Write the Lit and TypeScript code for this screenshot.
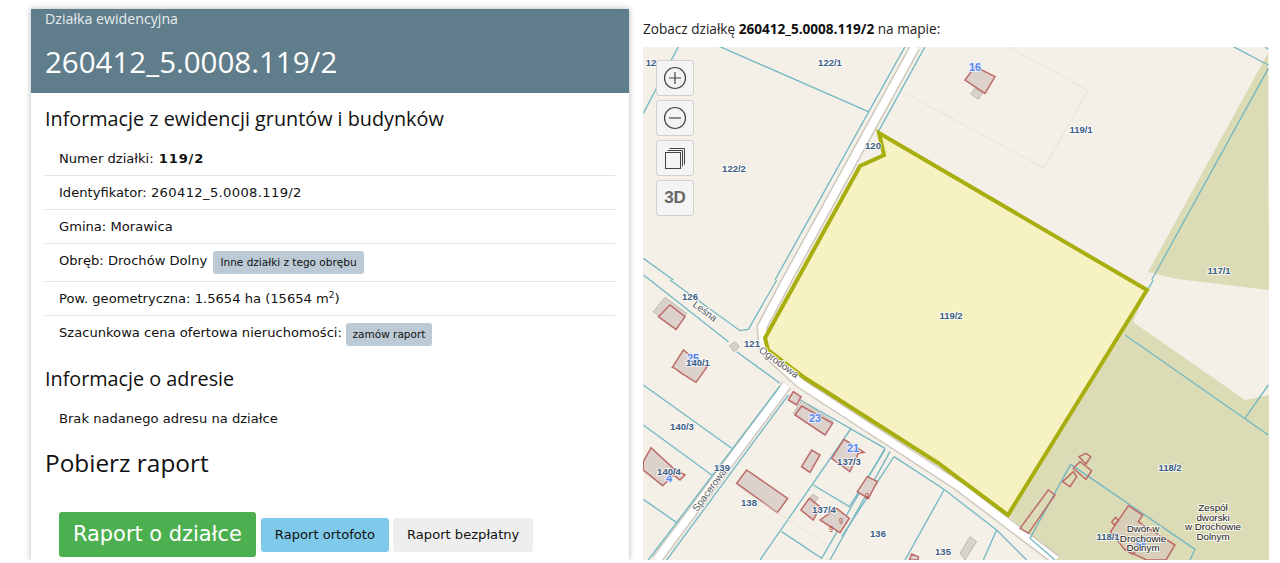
import { LitElement, html, css, svg } from "lit";
import { customElement } from "lit/decorators.js";

const Z3 = "translate(640 0) scale(.33333)";
const Z4 = "translate(960 0) scale(.33333)";
const Z5 = "translate(640 280) scale(.33333)";
const Z6 = "translate(960 280) scale(.33333)";

const blue5 = [
  "90,0 300,152 325,148 410,0", "30,0 265,185", "290,215 420,310", "10,315 275,505", "10,435 215,585",
  "10,658 110,728", "420,318 25,840", "445,345 80,840", "632,447 360,840", "455,345 735,505",
  "735,505 545,835 425,755", "520,615 628,680 735,510", "750,515 570,840", "762,530 915,630 960,665",
  "912,630 795,840", "762,530 605,770",
];
const blue6 = [
  "495,165 925,465", "855,415 925,315", "210,775 332,553 705,808 690,840", "0,665 110,750 200,840",
  "110,750 70,840", "210,775 285,840", "580,0 565,25",
];
const blue3 = ["115,140 10,340", "240,140 685,335", "10,775 100,840", "10,825 30,840", "795,140 405,840", "855,140 715,395"];
const blue4 = ["820,140 925,195", "925,205 575,840", "915,142 925,147"];

const bld5 = [
  "55,110 90,75 135,110 108,148", "97,262 130,210 200,262 168,307 125,280 105,265", "445,360 460,335 483,350 470,375",
  "465,405 485,378 578,430 555,465", "485,560 515,510 540,525 510,577", "575,535 612,478 672,517 655,520 630,575",
  "652,635 682,590 712,605 685,655", "290,610 320,570 443,655 412,698",
  "10,545 33,503 100,565 135,585 120,600 100,585 68,617 10,570", "483,690 508,655 540,680 520,720",
  "540,720 590,685 628,715 600,758", "808,840 815,822 835,830 835,840",
];
const labels: [string, number, number][] = [
  ["122/1", 830, 66], ["122/2", 734, 172], ["119/1", 1081, 133], ["117/1", 1219, 274], ["119/2", 951, 319],
  ["126", 690, 300], ["121", 752, 347], ["140/1", 698, 366], ["140/3", 682, 430], ["140/4", 669, 475], ["139", 722, 471],
  ["138", 749, 506], ["137/3", 849, 465], ["137/4", 824, 513], ["136", 878, 537], ["135", 943, 555], ["118/2", 1170, 471], ["118/1", 1108, 540],
  ["12", 651, 66], ["120", 873, 149],
];
const nums: [string, number, number][] = [["16", 975, 71], ["25", 693, 362], ["23", 815, 422], ["21", 853, 452], ["4", 669, 482]];

@customElement("app-root")
export class AppRoot extends LitElement {
  static styles = css`
    :host { display: block; width: 1280px; height: 563px; overflow: hidden; background: #fff; }
    .page { display: flex; height: 560px; padding-left: 31px; gap: 14px; box-sizing: border-box; padding-top: 9px; }
    .card { width: 598px; flex: none; background: #fff; box-shadow: 0 0 6px rgba(0,0,0,.3); overflow: hidden;
      font: 13.1px/19px "DejaVu Sans", sans-serif; color: #111; clip-path: inset(-8px -8px 0 -8px); }
    .head { background: #607d8b; color: #fff; height: 84px; padding: 0 14px; box-sizing: border-box; }
    .kicker { font: 14.2px/19px "Open Sans", sans-serif; color: #e6ecef; }
    .title { font: 29.5px/40px "Open Sans", sans-serif; margin-top: 14px; }
    .body { padding: 0 14px; }
    h3 { font: 400 19.8px/26px "Open Sans", sans-serif; margin: 13px 0 10px; color: #111; }
    .row { padding: 7px 14px; border-bottom: 1px solid #e3e3e3; }
    .row.last { border-bottom: none; }
    .wide { letter-spacing: .35px; }
    b { font-weight: 700; letter-spacing: .8px; margin-left: 1px; }
    sup { font-size: 9px; line-height: 0; vertical-align: 5px; }
    .lab { display: inline-block; background: #bccad5; border-radius: 3px; font-size: 10.5px; line-height: 23px;
      padding: 0 7px; color: #111; margin-left: 2px; vertical-align: top; }
    .lab.tight { margin-left: 0; padding: 0 6.5px; }
    h2 { font: 400 24.4px/34px "Open Sans", sans-serif; margin: 11px 0 32px; color: #111; }
    .btns { display: flex; align-items: center; gap: 5px; padding-left: 14px; }
    .btn { height: 34px; display: flex; align-items: center; padding: 0 14px; border-radius: 3px; }
    .green { height: 45px; background: #4caf50; color: #fff; font-size: 20.9px; }
    .cyan { background: #7fcaea; margin-right: -1px; }
    .grey { background: #eee; }
    .right { width: 626px; flex: none; font: 13.6px/19.5px "Open Sans", sans-serif; color: #222; }
    .cap { height: 38px; padding-top: 10px; box-sizing: border-box; }
    .cap b { color: #111; letter-spacing: 0; margin-left: 0; }
    .map { position: relative; height: 513px; overflow: hidden; background: #f4f0e7; }
    svg.m { display: block; }
    .ctrl { position: absolute; left: 13px; top: 13px; display: flex; flex-direction: column; gap: 4px; }
    .cb { width: 36px; height: 34px; background: #f4f4f4; border: 1px solid #d0d0d0; border-radius: 3px;
      display: flex; align-items: center; justify-content: center; color: #666; font: 700 17px "Liberation Sans", sans-serif; }
    .cb svg { display: block; }
    .pl { font: 700 9.5px "Liberation Sans", sans-serif; fill: #3b6087; text-anchor: middle; }
    .pl.h { paint-order: stroke; stroke: rgba(255,255,255,.7); stroke-width: 2px; }
    .num { font: 700 11px "Liberation Sans", sans-serif; fill: #5a86e8; text-anchor: middle; paint-order: stroke; stroke: #e8eeff; stroke-width: 2px; }
    .st { font: 10px "Liberation Sans", sans-serif; fill: #555; text-anchor: middle; paint-order: stroke; stroke: #fff; stroke-width: 2px; }
    .pn { font: 9.8px "Liberation Sans", sans-serif; fill: #222; text-anchor: middle; paint-order: stroke; stroke: rgba(255,255,255,.8); stroke-width: 2px; }
    .g { font: 7px "Liberation Sans", sans-serif; fill: #b04040; text-anchor: middle; }
  `;

  private mapSvg() {
    const line = (p: string, w = 4, c = "#74b8c3") => svg`<polyline points=${p} fill="none" stroke=${c} stroke-width=${w}/>`;
    const bld = (p: string, fill = "#dcd2cb") => svg`<polygon points=${p} fill=${fill} stroke="#bd6a68" stroke-width="4.5"/>`;
    const grey = (p: string) => svg`<polygon points=${p} fill="#d8d2cb" stroke="#a9a6a0" stroke-width="2"/>`;
    return svg`
      <svg class="m" width="626" height="513" viewBox="643 47 626 513" xmlns="http://www.w3.org/2000/svg">
        <polygon points="1148,272 1268,53 1269,290 1177,279" fill="#dbdbb5"/>
        <polygon points="1147,290 1133,322 1245,400 1269,395 1269,560 1055,560 1008,515" fill="#dbdbb5"/>

        <polyline points="1008,47 1088,90 1044,168 903,92" fill="none" stroke="#e6e2d8" stroke-width="1"/>
        <polyline points="915,47 787,280 762,327 764,350 800,383 960,487 1056,560" fill="none" stroke="#cfc8bd" stroke-width="11"/>
        <polyline points="915,47 787,280 762,327 764,350 800,383 960,487 1056,560" fill="none" stroke="#fff" stroke-width="8"/>
        <g transform=${Z5}>
          <polyline points="440,315 50,840" fill="none" stroke="#cfc8bd" stroke-width="33"/>
          <polyline points="440,315 50,840" fill="none" stroke="#fff" stroke-width="24"/>
        </g>
        <g transform=${Z5}>${blue5.map((p) => line(p))}</g>
        <g transform=${Z6}>${blue6.map((p) => line(p))}</g>
        <g transform=${Z3}>${blue3.map((p) => line(p))}</g>
        <g transform=${Z4}>${blue4.map((p) => line(p))}</g>

        <polygon points="879,133 1147,290 1008,515 938,463 805,378 768,350 765,338 860,166 884,155" fill="#f7f2c2" stroke="#a9ae10" stroke-width="4" stroke-linejoin="miter"/>

        <g transform=${Z5}>
          ${grey("40,95 75,52 140,100 110,148")}
          ${grey("268,197 285,185 298,200 282,215")}
          ${grey("460,400 485,362 580,425 555,465")}
          ${grey("510,650 520,643 535,655 525,665")}
          ${bld5.map((p) => bld(p))}
          <polyline points="265,600 560,795" fill="none" stroke="#e0dcd0" stroke-width="2"/>
        </g>
        <g transform=${Z4}>
          ${grey("32,282 45,265 68,280 55,298")}
          ${bld("15,240 45,200 105,230 75,280")}
        </g>
        <g transform=${Z6}>
          ${grey("0,820 30,770 50,785 15,840")}
          ${bld("180,745 265,630 285,645 205,760", "none")}
          ${bld("308,605 340,575 350,590 330,620", "none")}
          ${bld("340,565 360,545 395,572 378,598", "none")}
          ${bld("357,530 378,520 392,530 378,552", "none")}
          ${bld("452,755 505,677 548,705 535,725 645,795 618,840 560,840 495,810", "#d6ceb6")}
          ${bld("455,725 467,712 475,722 463,735", "none")}
          ${bld("497,810 510,795 530,810 518,823", "none")}
          <rect x="530" y="775" width="26" height="26" fill="#6f9cf0"/>
        </g>

        ${nums.map(([t, x, y]) => svg`<text class="num" x=${x} y=${y}>${t}</text>`)}
        <text class="g" x="867" y="497">g</text>
        <text class="g" x="841" y="522">g</text>
        <text class="g" x="831" y="530">g</text>
        <text class="st" transform="translate(703 314) rotate(36)">Leśna</text>
        <text class="st" transform="translate(777 365) rotate(36)">Ogrodowa</text>
        <text class="st" transform="translate(712 492) rotate(-54)">Spacerowa</text>
        ${labels.map(([t, x, y]) => svg`<text class="pl h" x=${x} y=${y}>${t}</text>`)}
        <text class="pn"><tspan x="1143" y="532">Dwór w</tspan><tspan x="1143" y="541.5">Drochowie</tspan><tspan x="1143" y="551">Dolnym</tspan></text>
        <text class="pn"><tspan x="1213" y="511">Zespół</tspan><tspan x="1213" y="520.5">dworski</tspan><tspan x="1213" y="530">w Drochowie</tspan><tspan x="1213" y="539.5">Dolnym</tspan></text>
      </svg>`;
  }

  render() {
    return html`
      <div class="page">
        <section class="card">
          <div class="head">
            <div class="kicker">Działka ewidencyjna</div>
            <div class="title">260412_5.0008.119/2</div>
          </div>
          <div class="body">
            <h3>Informacje z ewidencji gruntów i budynków</h3>
            <div class="row">Numer działki: <b>119/2</b></div>
            <div class="row">Identyfikator: <span class="wide">260412_5.0008.119/2</span></div>
            <div class="row">Gmina: Morawica</div>
            <div class="row">Obręb: Drochów Dolny <span class="lab">Inne działki z tego obrębu</span></div>
            <div class="row">Pow. geometryczna: 1.5654 ha (15654 m<sup>2</sup>)</div>
            <div class="row last">Szacunkowa cena ofertowa nieruchomości: <span class="lab tight">zamów raport</span></div>
            <h3>Informacje o adresie</h3>
            <div class="row last">Brak nadanego adresu na działce</div>
            <h2>Pobierz raport</h2>
            <div class="btns">
              <div class="btn green">Raport o działce</div>
              <div class="btn cyan">Raport ortofoto</div>
              <div class="btn grey">Raport bezpłatny</div>
            </div>
          </div>
        </section>
        <section class="right">
          <div class="cap">Zobacz działkę <b>260412_5.0008.119/2</b> na mapie:</div>
          <div class="map">
            ${this.mapSvg()}
            <div class="ctrl">
              <div class="cb"><svg width="26" height="26" viewBox="0 0 26 26" fill="none" stroke="#444" stroke-width="1.2"><circle cx="13" cy="13" r="10.5"/><path d="M7 13h12M13 7v12"/></svg></div>
              <div class="cb"><svg width="26" height="26" viewBox="0 0 26 26" fill="none" stroke="#444" stroke-width="1.2"><circle cx="13" cy="13" r="10.5"/><path d="M7 13h12"/></svg></div>
              <div class="cb"><svg width="26" height="26" viewBox="0 0 26 26" fill="none" stroke="#444" stroke-width="1"><rect x="3.5" y="7.5" width="15" height="16"/><path d="M5.5 5.5h15v16M7.5 3.5h15v16"/></svg></div>
              <div class="cb">3D</div>
            </div>
          </div>
        </section>
      </div>
    `;
  }
}
